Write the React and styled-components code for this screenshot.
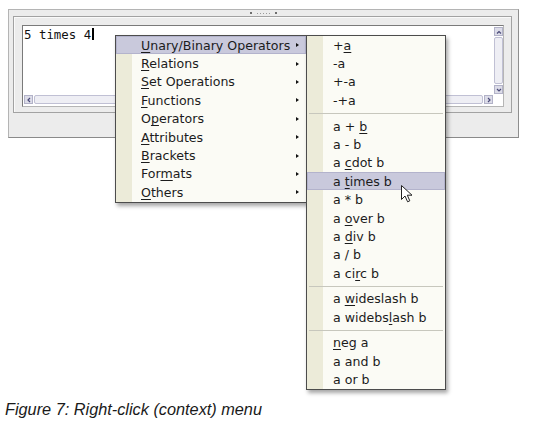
import React from "react";
import styled, { createGlobalStyle } from "styled-components";

const Global = createGlobalStyle`
  html, body { margin: 0; padding: 0; background: #ffffff; }
  body { width: 556px; height: 434px; overflow: hidden; }
`;

const Page = styled.div`
  position: relative;
  width: 556px;
  height: 434px;
  box-sizing: border-box;
  padding-top: 9px;
`;

const Window = styled.div`
  margin-left: 8px;
  width: 511px;
  height: 129px;
  box-sizing: border-box;
  border: 1px solid #b4b4b4;
  border-right-color: #8e8e8e;
  border-bottom-color: #8a8a8a;
  background: #ececec;
  display: flex;
  flex-direction: column;
`;

const HandleBar = styled.div`
  height: 6px;
  display: flex;
  align-items: center;
  justify-content: center;
  gap: 2px;
`;

const Dot = styled.span`
  width: ${(p) => (p.$big ? 2 : 1)}px;
  height: ${(p) => (p.$big ? 2 : 1)}px;
  background: ${(p) => (p.$big ? "#6e6e6e" : "#9a9a9a")};
  margin: 0 ${(p) => (p.$big ? 3 : 0)}px;
`;

const Panel = styled.div`
  margin: 0 6px 0 4px;
  height: 97px;
  box-sizing: border-box;
  border: 1px solid #a2a2a2;
  box-shadow: inset 1px 1px 0 #fafafa;
  padding: 8px 7px 5px 8px;
  display: flex;
`;

const Editor = styled.div`
  flex: 1;
  box-sizing: border-box;
  border: 1px solid #7a7a7a;
  border-right-color: #b5b5b5;
  border-bottom-color: #b5b5b5;
  background: #ffffff;
  display: grid;
  grid-template-columns: 1fr 9px;
  grid-template-rows: 1fr 9px;
  padding: 1px 0 2px 1px;
`;

const Code = styled.div`
  font-family: "DejaVu Sans Mono", monospace;
  font-size: 12.4px;
  line-height: 13px;
  color: #111;
  padding: 1px 0 0 0;
  display: flex;
  align-items: flex-start;
`;

const Caret = styled.span`
  display: inline-block;
  width: 2px;
  height: 12px;
  background: #000;
  margin-left: 1px;
`;

const Scroll = styled.div`
  display: flex;
  flex-direction: ${(p) => (p.$vertical ? "column" : "row")};
  gap: 1px;
  margin: ${(p) => (p.$vertical ? "0 0 1px 0" : "0 1px 0 0")};
`;

const ScrollButton = styled.div`
  width: 9px;
  height: 9px;
  flex: none;
  box-sizing: border-box;
  background: #dcdce8;
  border: 1px solid #b2b2c8;
  display: flex;
  align-items: center;
  justify-content: center;
`;

const Thumb = styled.div`
  flex: 1;
  box-sizing: border-box;
  background: #eeeef4;
  border: 1px solid #c0c0d4;
  border-radius: 2px;
`;

const Caption = styled.div`
  margin-top: 262px;
  margin-left: 5px;
  font-family: "Liberation Sans", Arial, sans-serif;
  font-style: italic;
  font-size: 16.3px;
  line-height: 19px;
  color: #1a1a1a;
`;

const Menu = styled.div`
  position: absolute;
  left: ${(p) => p.$x}px;
  top: ${(p) => p.$y}px;
  width: ${(p) => p.$w}px;
  box-sizing: border-box;
  border: 1px solid #4c4c4c;
  background: linear-gradient(to right, #ecebd9 0 16px, #fbfbf5 16px);
  box-shadow: 2px 3px 4px rgba(0, 0, 0, 0.35);
  font-family: "DejaVu Sans", sans-serif;
  font-size: 12.6px;
  color: #1c1c1c;
`;

const Item = styled.div`
  height: 18.4px;
  display: flex;
  align-items: center;
  justify-content: space-between;
  padding: 0 5px 0 ${(p) => p.$indent}px;
  white-space: nowrap;
  background: ${(p) => (p.$active ? "#c9c9dc" : "transparent")};
  box-shadow: ${(p) => (p.$active ? "inset 0 0 0 1px #b3b3cc" : "none")};
`;

const Arrow = styled.span`
  width: 0;
  height: 0;
  border-left: 3px solid #111;
  border-top: 2.5px solid transparent;
  border-bottom: 2.5px solid transparent;
  margin-right: 2px;
`;

const Separator = styled.div`
  height: 7.3px;
  display: flex;
  align-items: center;
  padding: 0 2px;
  &::after {
    content: "";
    flex: 1;
    height: 1px;
    background: #c7c7bd;
  }
`;

const Mnemonic = styled.u`
  text-decoration-thickness: 1px;
  text-underline-offset: 2px;
`;

const Pointer = styled.svg`
  position: absolute;
  left: 401px;
  top: 185px;
`;

const Chevron = ({ dir }) => {
  const paths = {
    up: "M1 4.5 L3 2.5 L5 4.5",
    down: "M1 2 L3 4 L5 2",
    left: "M4 1 L2 3 L4 5",
    right: "M2 1 L4 3 L2 5",
  };
  return (
    <svg width="6" height="6" viewBox="0 0 6 6">
      <path d={paths[dir]} fill="none" stroke="#4a4a78" strokeWidth="1.2" />
    </svg>
  );
};

const L = ({ t }) => {
  const i = t.indexOf("_");
  if (i < 0) return <span>{t}</span>;
  return (
    <span>
      {t.slice(0, i)}
      <Mnemonic>{t[i + 1]}</Mnemonic>
      {t.slice(i + 2)}
    </span>
  );
};

const mainItems = [
  "_Unary/Binary Operators",
  "_Relations",
  "_Set Operations",
  "_Functions",
  "O_perators",
  "_Attributes",
  "_Brackets",
  "For_mats",
  "_Others",
];

const subItems = [
  "+_a",
  "-a",
  "+-a",
  "-+a",
  null,
  "a + _b",
  "a - b",
  "a _cdot b",
  "a _times b",
  "a * b",
  "a _over b",
  "a _div b",
  "a / b",
  "a ci_rc b",
  null,
  "a _wideslash b",
  "a widebs_lash b",
  null,
  "_neg a",
  "a and b",
  "a or b",
];

export default function App() {
  return (
    <Page>
      <Global />
      <Window>
        <HandleBar>
          <Dot $big />
          <Dot />
          <Dot />
          <Dot />
          <Dot />
          <Dot />
          <Dot $big />
        </HandleBar>
        <Panel>
          <Editor>
            <Code>
              5 times 4<Caret />
            </Code>
            <Scroll $vertical>
              <ScrollButton>
                <Chevron dir="up" />
              </ScrollButton>
              <Thumb />
              <ScrollButton>
                <Chevron dir="down" />
              </ScrollButton>
            </Scroll>
            <Scroll>
              <ScrollButton>
                <Chevron dir="left" />
              </ScrollButton>
              <Thumb />
              <ScrollButton>
                <Chevron dir="right" />
              </ScrollButton>
            </Scroll>
          </Editor>
        </Panel>
      </Window>
      <Caption>Figure 7: Right-click (context) menu</Caption>

      <Menu $x={115} $y={35} $w={192}>
        {mainItems.map((t, i) => (
          <Item key={t} $indent={25} $active={i === 0}>
            <L t={t} />
            <Arrow />
          </Item>
        ))}
      </Menu>

      <Menu $x={306} $y={35} $w={140}>
        {subItems.map((t, i) =>
          t === null ? (
            <Separator key={"s" + i} />
          ) : (
            <Item key={t} $indent={26} $active={t === "a _times b"}>
              <L t={t} />
            </Item>
          )
        )}
      </Menu>

      <Pointer width="12" height="18" viewBox="0 0 12 18">
        <path
          d="M0.5 0.5 L0.5 14.5 L4 11 L6.6 16.8 L8.8 15.8 L6.3 10.2 L11 10.2 Z"
          fill="#ffffff"
          stroke="#222"
          strokeWidth="1"
          strokeLinejoin="round"
        />
      </Pointer>
    </Page>
  );
}
